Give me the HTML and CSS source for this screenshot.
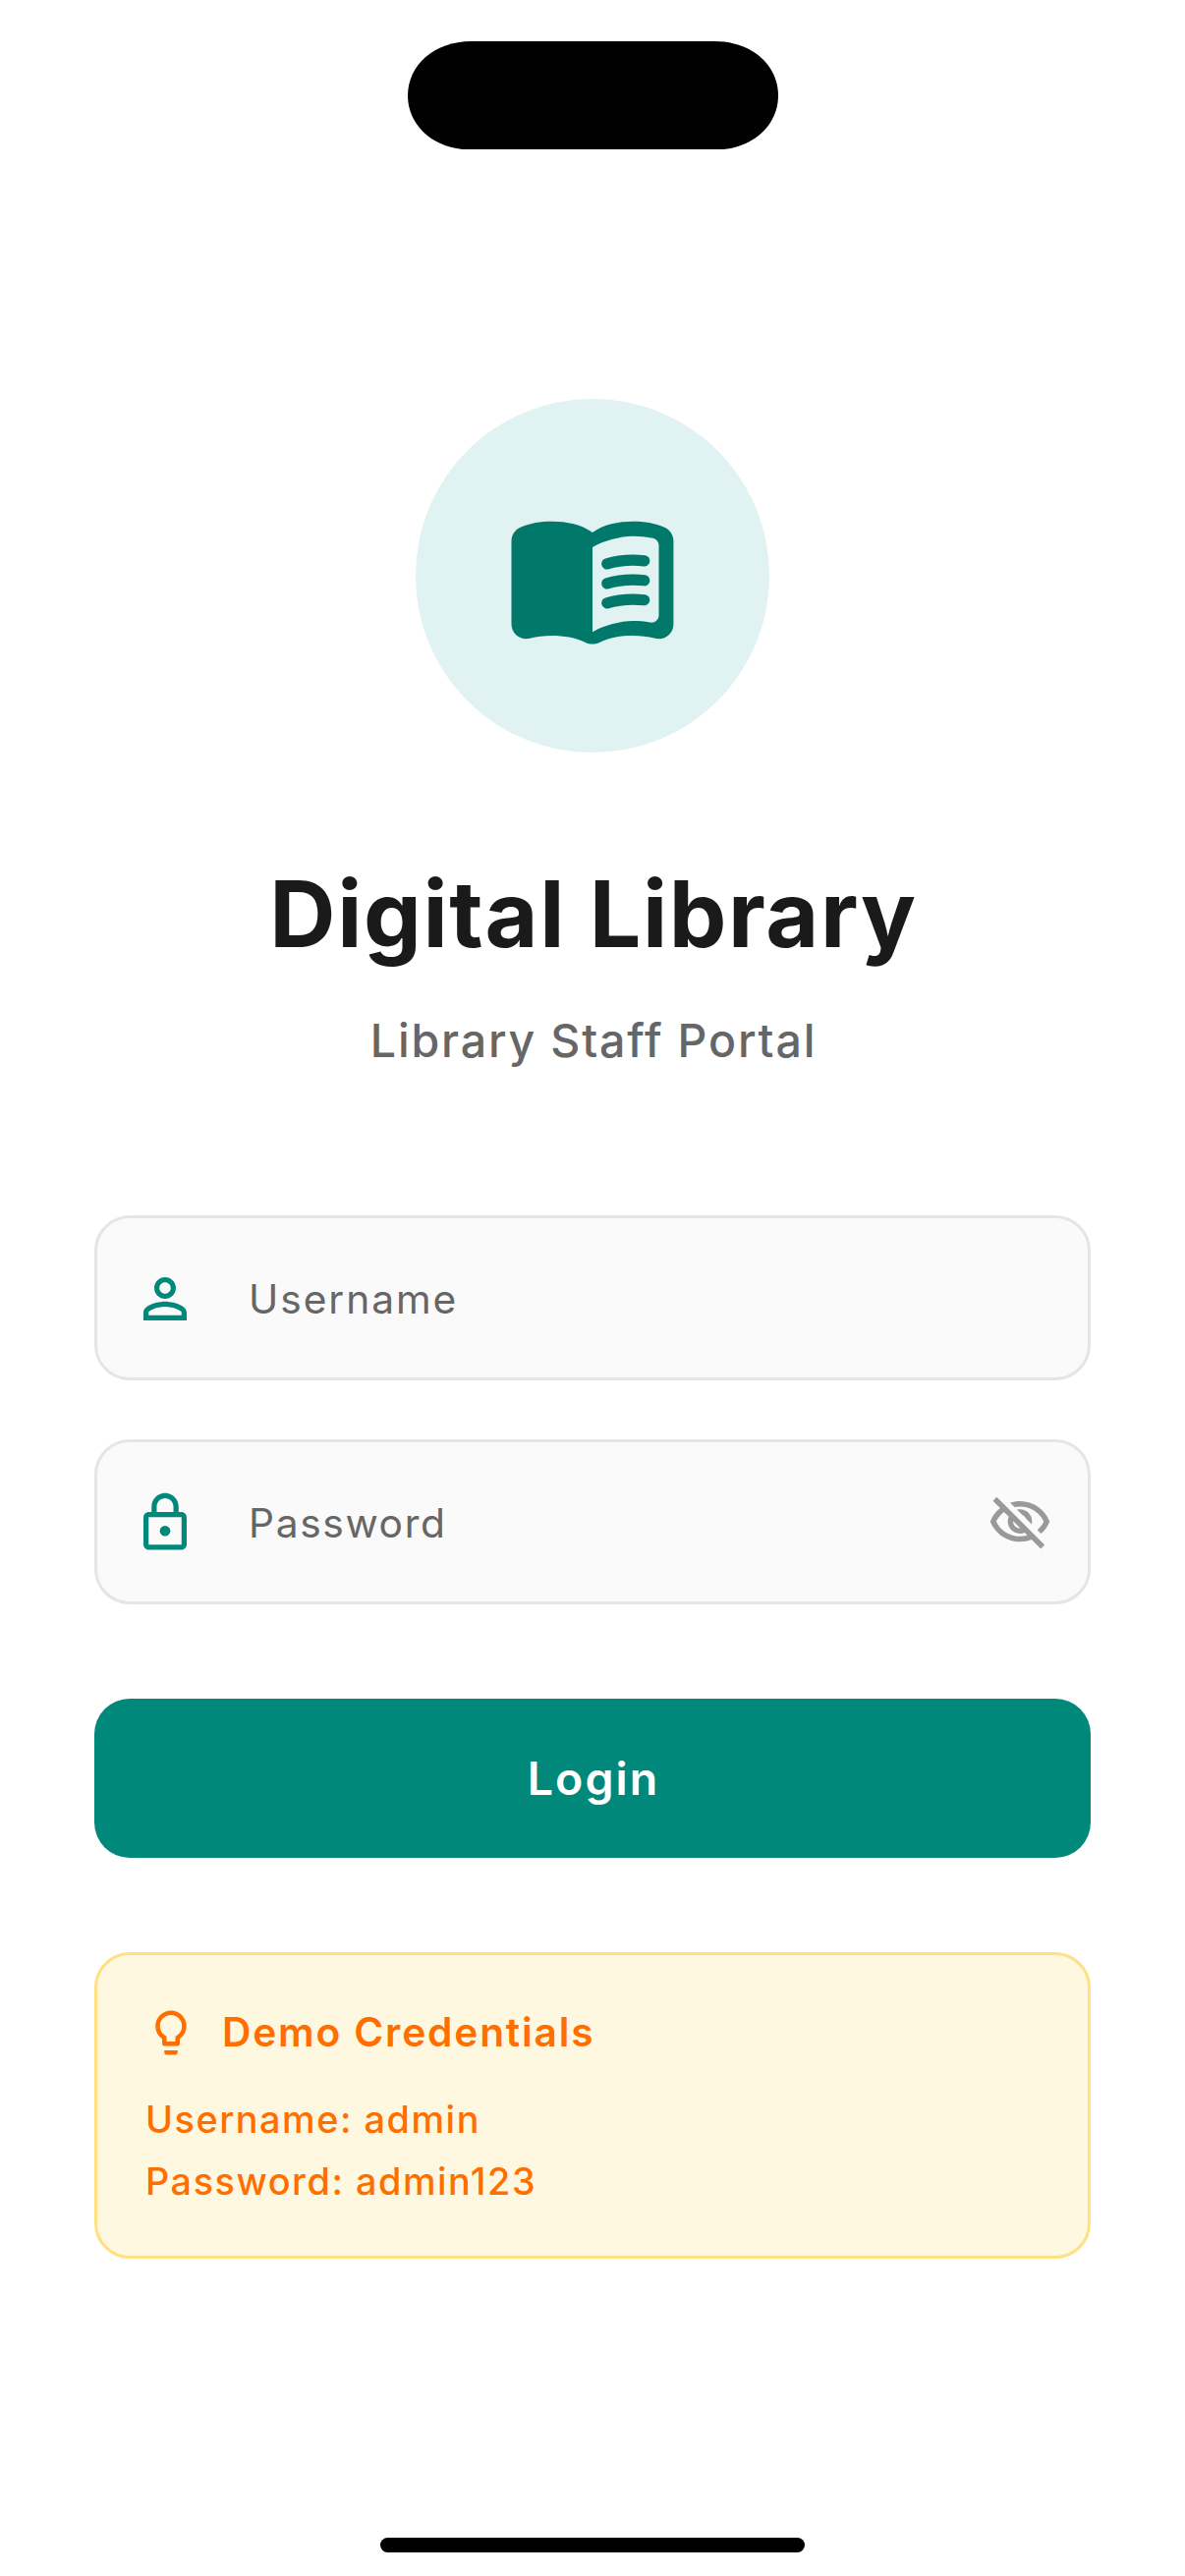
FILE: index.html
```html
<!DOCTYPE html>
<html lang="en">
<head>
<meta charset="utf-8">
<title>Digital Library</title>
<link rel="stylesheet" href="styles.css">
</head>
<body>
<div class="screen">
  <svg class="island" viewBox="0 0 377 110.5" aria-hidden="true"><path d="M65 0H312C351 0 377 25 377 55.25S351 110.5 312 110.5H65C26 110.5 0 85.500 0 55.250S26 0 65 0z"/></svg>

  <main class="content">
    <div class="logo">
      <svg class="logo-icon" viewBox="0 0 24 24" aria-hidden="true"><path d="M17.5 4.500c-1.950 0-4.050.4-5.500 1.500-1.450-1.100-3.550-1.500-5.500-1.500-1.450 0-2.990.22-4.280.79C1.490 5.620 1 6.330 1 7.140v11.280c0 1.300 1.220 2.260 2.480 1.940.98-.25 2.020-.36 3.020-.36 1.560 0 3.220.26 4.560.92.6.3 1.280.3 1.870 0 1.340-.67 3-.92 4.560-.92 1 0 2.040.11 3.020.36 1.260.33 2.480-.63 2.480-1.940V7.140c0-.81-.49-1.520-1.220-1.850-1.280-.57-2.820-.79-4.270-.79zM21 17.230c0 .63-.58 1.090-1.200.98-.75-.14-1.530-.2-2.300-.2-1.700 0-4.150.65-5.500 1.500V8c1.350-.85 3.800-1.500 5.500-1.500.92 0 1.830.09 2.700.28.46.1.8.51.8.98v9.470z"/><path d="M13.980 11.010c-.32 0-.61-.2-.71-.52-.13-.39.09-.82.48-.94 1.540-.5 3.530-.66 5.360-.45.41.05.71.42.66.83s-.42.71-.83.66c-1.620-.19-3.390-.04-4.730.39-.08.01-.16.03-.23.03zM13.980 13.670c-.32 0-.61-.2-.71-.52-.13-.39.09-.82.48-.94 1.530-.5 3.530-.66 5.360-.45.41.05.71.42.66.83s-.42.71-.83.66c-1.620-.19-3.390-.04-4.730.39-.08.02-.16.03-.23.03zM13.980 16.330c-.32 0-.61-.2-.71-.52-.13-.39.09-.82.48-.94 1.530-.5 3.530-.66 5.360-.45.41.05.71.42.66.83s-.42.7-.83.66c-1.620-.19-3.390-.04-4.730.39-.08.02-.16.03-.23.03z"/></svg>
    </div>
    <h1 class="title">Digital Library</h1>
    <p class="subtitle">Library Staff Portal</p>

    <div class="fields">
      <div class="field">
        <svg class="icon" viewBox="0 0 24 24" aria-hidden="true"><path d="M12 5.900c1.160 0 2.100.94 2.100 2.100s-.94 2.100-2.100 2.100S9.900 9.160 9.900 8s.94-2.100 2.100-2.100m0 9c2.970 0 6.100 1.460 6.100 2.100v1.100H5.900V17c0-.64 3.130-2.100 6.100-2.100M12 4C9.790 4 8 5.790 8 8s1.790 4 4 4 4-1.790 4-4-1.790-4-4-4zm0 9c-2.670 0-8 1.340-8 4v3h16v-3c0-2.660-5.330-4-8-4z"/></svg>
        <span class="placeholder user">Username</span>
      </div>
      <div class="field">
        <svg class="icon" viewBox="0 0 24 24" aria-hidden="true"><path fill-rule="evenodd" d="M18 8h-1V6c0-2.760-2.240-5-5-5S7 3.240 7 6v2H6c-1.100 0-2 .9-2 2v10c0 1.100.9 2 2 2h12c1.100 0 2-.9 2-2V10c0-1.100-.9-2-2-2zM8.900 6c0-1.710 1.390-3.100 3.100-3.100s3.100 1.390 3.100 3.100v2H8.900V6zM5.900 9.900h12.200v10.200H5.900z"/><circle cx="12" cy="15" r="1.950"/></svg>
        <span class="placeholder pass">Password</span>
        <svg class="icon toggle" viewBox="0 0 24 24" aria-hidden="true"><path d="M12 6c3.790 0 7.170 2.130 8.820 5.500-.59 1.220-1.420 2.270-2.410 3.120l1.410 1.410c1.390-1.230 2.490-2.770 3.180-4.530C21.270 7.110 17 4 12 4c-1.270 0-2.490.2-3.640.57l1.650 1.650C10.660 6.090 11.320 6 12 6zm-1.070 1.140L13 9.210c.57.25 1.030.71 1.280 1.280l2.070 2.070c.08-.34.14-.7.14-1.070C16.500 9.010 14.480 7 12 7c-.37 0-.72.05-1.070.14zM2.010 3.870l2.680 2.680C3.060 7.830 1.770 9.530 1 11.500 2.730 15.890 7 19 12 19c1.520 0 2.980-.29 4.320-.82l3.420 3.420 1.410-1.410L3.420 2.450 2.010 3.870zm7.500 7.500l2.610 2.610c-.04.01-.08.02-.12.02-1.380 0-2.500-1.120-2.500-2.500 0-.05.01-.08.01-.13zm-3.400-3.400l1.750 1.750c-.23.55-.36 1.150-.36 1.780 0 2.480 2.020 4.500 4.500 4.500.63 0 1.230-.13 1.770-.36l.98.98c-.88.24-1.800.38-2.750.38-3.790 0-7.170-2.130-8.820-5.500.7-1.430 1.720-2.610 2.930-3.530z"/></svg>
      </div>
    </div>

    <button class="login" type="button">Login</button>

    <section class="demo">
      <div class="demo-head">
        <svg class="bulb" viewBox="0 0 24 24" aria-hidden="true"><path d="M9 21c0 .55.45 1 1 1h4c.55 0 1-.45 1-1v-1H9v1zm3-19C8.140 2 5 5.140 5 9c0 2.380 1.190 4.470 3 5.740V17c0 .55.45 1 1 1h6c.55 0 1-.45 1-1v-2.260c1.810-1.270 3-3.360 3-5.740 0-3.860-3.140-7-7-7zm2.850 11.100l-.85.6V16h-4v-2.300l-.85-.6C7.800 12.160 7 10.630 7 9c0-2.760 2.240-5 5-5s5 2.240 5 5c0 1.630-.8 3.160-2.150 4.100z"/></svg>
        <span class="demo-title">Demo Credentials</span>
      </div>
      <p class="demo-line">Username: admin</p>
      <p class="demo-line">Password: admin123</p>
    </section>
  </main>

  <div class="home-bar"></div>
</div>
</body>
</html>
```
FILE: styles.css
```css
* { box-sizing: border-box; margin: 0; padding: 0; }

body {
  background: #fff;
  font-family: Inter, "Liberation Sans", sans-serif;
}

.screen {
  width: 1206px;
  height: 2622px;
  display: flex;
  flex-direction: column;
  align-items: center;
  padding: 41.7px 0 24px;
}

svg { display: block; flex: none; fill: currentColor; }

.island { width: 377px; height: 110.5px; color: #000; }

.content {
  width: 1014px;
  flex: 1;
  display: flex;
  flex-direction: column;
  align-items: stretch;
  padding-top: 253.8px;
}

.logo {
  align-self: center;
  width: 360px;
  height: 360px;
  border-radius: 50%;
  background: #e0f2f1;
  color: #00796b;
  display: flex;
  align-items: center;
  justify-content: center;
  padding-top: 2px;
}

.logo-icon { width: 180px; height: 180px; }

.title {
  margin-top: 108px;
  padding-left: 2px;
  text-align: center;
  font-size: 93.1px;
  font-weight: 700;
  line-height: 112px;
  letter-spacing: 1.62px;
  color: #1a1a1a;
}

.subtitle {
  margin-top: 40px;
  padding-left: 2px;
  text-align: center;
  font-size: 46.5px;
  font-weight: 500;
  line-height: 66px;
  letter-spacing: 1.84px;
  color: #666;
}

.fields {
  margin-top: 145px;
  display: flex;
  flex-direction: column;
  gap: 60px;
}

.field {
  height: 168px;
  border: 3px solid #e5e5e5;
  border-radius: 36px;
  background: #fafafa;
  color: #00897b;
  display: flex;
  align-items: center;
  padding: 2px 36px 0;
}

.icon { width: 66px; height: 66px; }

.toggle { margin-left: auto; color: #999; }

.placeholder {
  margin-left: 52px;
  padding-top: 2px;
  font-size: 40.7px;
  line-height: 60px;
  color: #666;
}

.user { letter-spacing: 1.95px; }
.pass { letter-spacing: 1.65px; }

.login {
  margin-top: 96px;
  height: 162px;
  border: 0;
  border-radius: 36px;
  background: #00897b;
  color: #fff;
  font: 600 46.5px/66px Inter, "Liberation Sans", sans-serif;
  letter-spacing: 2.03px;
  padding-left: 2px;
}

.demo {
  margin-top: 96px;
  height: 312px;
  border: 3px solid #ffe082;
  border-radius: 36px;
  background: #fff8e1;
  color: #ff6f00;
  padding: 52px 48px 45px;
}

.demo-head {
  display: flex;
  align-items: center;
  gap: 25px;
  height: 54px;
  margin-bottom: 30px;
}

.bulb { width: 54px; height: 54px; }

.demo-title {
  font-size: 40.7px;
  font-weight: 600;
  line-height: 54px;
  letter-spacing: 1.83px;
}

.demo-line {
  padding-left: 1px;
  font-size: 37.8px;
  font-weight: 500;
  line-height: 63px;
  letter-spacing: 1.54px;
}

.home-bar {
  width: 432px;
  height: 15px;
  border-radius: 7.5px;
  background: #000;
}
```
